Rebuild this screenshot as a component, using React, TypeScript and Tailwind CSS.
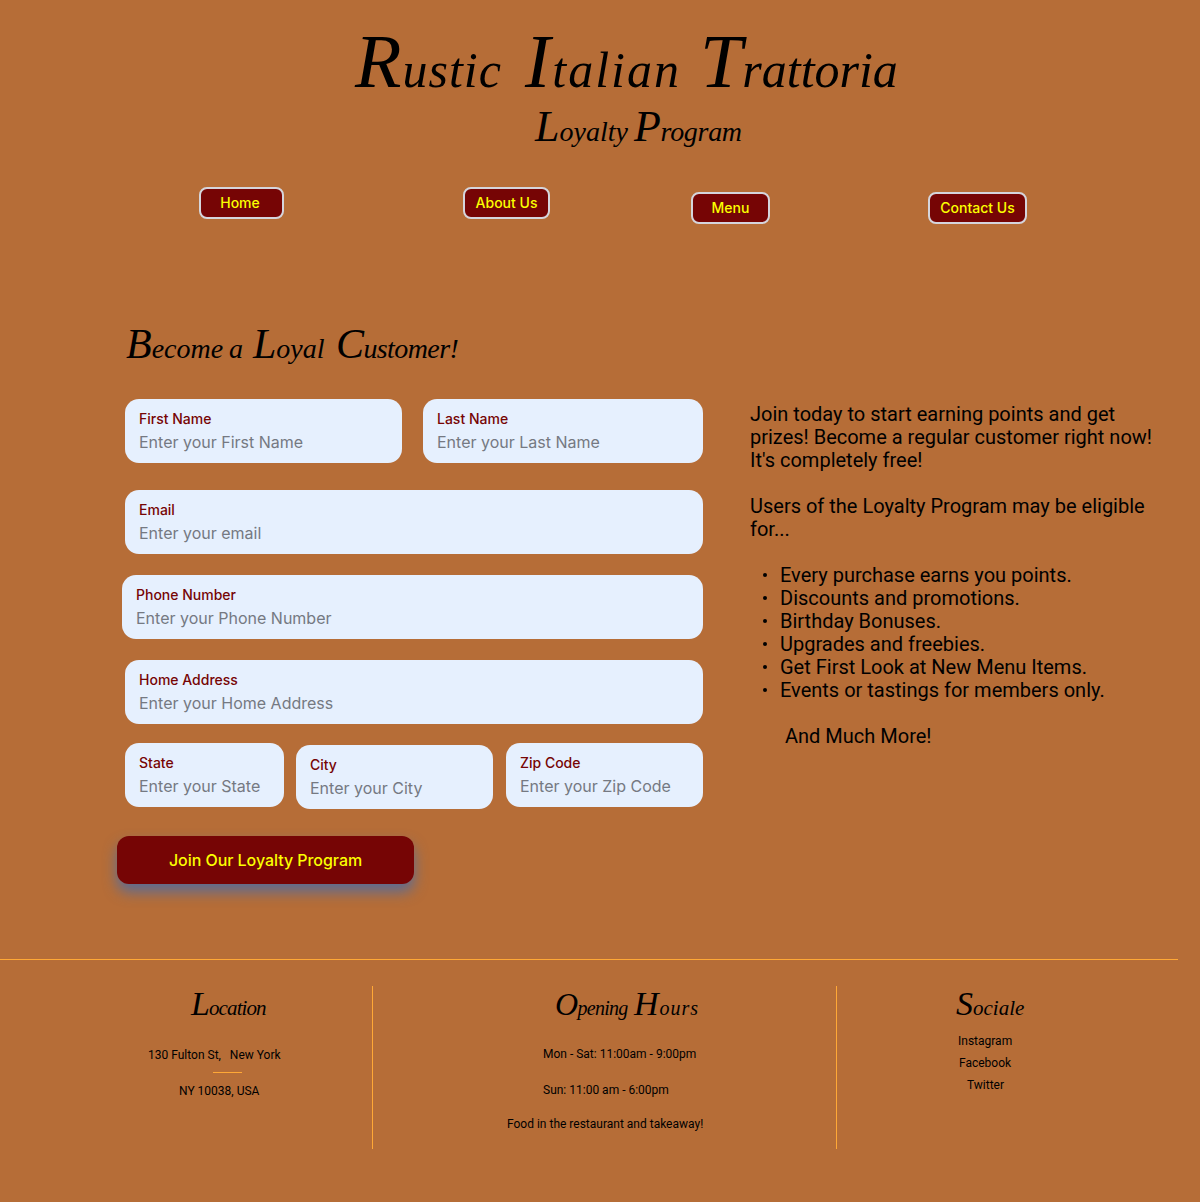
import React from "react";

function Word({ children, className }: { children: string; className: string }) {
  return <span className={`block shrink-0 whitespace-nowrap first-letter:leading-[0] ${className}`}>{children}</span>;
}

function NavButton({ label, className }: { label: string; className: string }) {
  return (
    <button
      className={`h-8 shrink-0 whitespace-nowrap rounded-lg border-2 border-[#d5d5dc] bg-[#760505] text-center text-sm leading-7 font-medium text-[#fbff00] ${className}`}
    >
      {label}
    </button>
  );
}

function Field({ label, className }: { label: string; className: string }) {
  const hint = label === "Email" ? "email" : label;
  return (
    <label className={`block h-16 shrink-0 rounded-[14px] bg-[#e6f0fe] px-3.5 pt-2.5 ${className}`}>
      <span className="block text-sm leading-5 font-medium text-[#760505]">{label}</span>
      <span className="mt-[1px] block whitespace-nowrap text-base leading-6 text-[#757982]">Enter your {hint}</span>
    </label>
  );
}

const perks = [
  "Every purchase earns you points.",
  "Discounts and promotions.",
  "Birthday Bonuses.",
  "Upgrades and freebies.",
  "Get First Look at New Menu Items.",
  "Events or tastings for members only.",
];

export default function App() {
  return (
    <div className="flex h-[1202px] w-[1200px] flex-col overflow-hidden bg-[#b66d37] font-['Inter',sans-serif] text-black">
      <header className="h-[187px] shrink-0 font-['Liberation_Serif',serif] italic">
        <h1 className="flex h-[104px] pt-[38px] pl-[355px] text-[50px] leading-[64px]">
          <Word className="w-[170px] tracking-[1px] first-letter:text-[76px]">Rustic</Word>
          <Word className="w-[175px] tracking-[2px] first-letter:text-[76px]">Italian</Word>
          <Word className="w-[200px] first-letter:text-[76px]">Trattoria</Word>
        </h1>
        <h2 className="flex pt-[12px] pl-[535px] text-[28px] leading-[32px]">
          <Word className="w-[99px] first-letter:text-[44px]">Loyalty</Word>
          <Word className="w-[120px] tracking-[-0.3px] first-letter:text-[44px]">Program</Word>
        </h2>
      </header>

      <nav className="flex h-[130px] shrink-0 items-start pl-[199px]">
        <NavButton label="Home" className="w-[85px] pr-[3px]" />
        <NavButton label="About Us" className="ml-[179px] w-[87px]" />
        <NavButton label="Menu" className="mt-[5px] ml-[141px] w-[79px]" />
        <NavButton label="Contact Us" className="mt-[5px] ml-[158px] w-[99px]" />
      </nav>

      <main className="flex h-[642px] shrink-0">
        <form className="w-[750px] shrink-0">
          <h3 className="flex h-[82px] pt-[16px] pl-[126px] font-['Liberation_Serif',serif] text-[28px] leading-[32px] italic">
            <Word className="w-[103px] first-letter:text-[42px]">Become</Word>
            <Word className="w-[24px]">a</Word>
            <Word className="w-[83px] first-letter:text-[42px]">Loyal</Word>
            <Word className="w-[122px] tracking-[-0.6px] first-letter:text-[42px]">Customer!</Word>
          </h3>
          <div className="flex pl-[125px]">
            <Field label="First Name" className="w-[277px]" />
            <Field label="Last Name" className="ml-[21px] w-[280px]" />
          </div>
          <Field label="Email" className="mt-[27px] ml-[125px] w-[578px]" />
          <Field label="Phone Number" className="mt-[21px] ml-[122px] w-[581px]" />
          <Field label="Home Address" className="mt-[21px] ml-[125px] w-[578px]" />
          <div className="mt-[19px] flex pl-[125px]">
            <Field label="State" className="w-[159px]" />
            <Field label="City" className="mt-[2px] ml-[12px] w-[197px]" />
            <Field label="Zip Code" className="ml-[13px] w-[197px]" />
          </div>
          <button
            type="button"
            className="mt-[27px] ml-[117px] block h-12 w-[297px] rounded-xl bg-[#760505] text-base font-medium tracking-[-0.05px] text-[#fbff00] shadow-[0_8px_14px_rgba(62,108,179,0.75)]"
          >
            Join Our Loyalty Program
          </button>
        </form>
        <section className="w-[420px] pt-[86px] font-['Roboto',sans-serif] text-xl leading-[23px]">
          <p>
            Join today to start earning points and get
            <br />
            prizes! Become a regular customer right now!
            <br />
            It's completely free!
          </p>
          <p className="mt-[23px]">
            Users of the Loyalty Program may be eligible
            <br />
            for...
          </p>
          <ul className="mt-[23px]">
            {perks.map((perk) => (
              <li key={perk} className="flex items-center">
                <span className="mr-[13px] mb-[2px] ml-[13px] size-1 rounded-full bg-black" />
                {perk}
              </li>
            ))}
          </ul>
          <p className="mt-[23px] pl-[35px]">And Much More!</p>
        </section>
      </main>

      <footer className="w-[1178px] shrink-0 border-t border-[#ffa836] font-['Roboto',sans-serif] text-xs leading-[14px]">
        <div className="mt-[26px] flex h-[163px]">
          <section className="w-[373px] shrink-0 border-r border-[#ffa836]">
            <h4 className="flex h-[62px] pt-[10px] pl-[191px] font-['Liberation_Serif',serif] text-[21px] leading-[24px] italic">
              <Word className="tracking-[-0.9px] first-letter:text-[34px]">Location</Word>
            </h4>
            <p className="pl-[148px] whitespace-pre">130 Fulton St,   New York</p>
            <div className="mt-[10px] ml-[213px] h-px w-[29px] bg-[#ffa836]" />
            <p className="mt-[11px] pl-[179px]">NY 10038, USA</p>
          </section>
          <section className="w-[464px] shrink-0 border-r border-[#ffa836]">
            <h4 className="flex h-[61px] pt-[10px] pl-[182px] font-['Liberation_Serif',serif] text-[20px] leading-[24px] italic">
              <Word className="w-[79px] tracking-[-0.7px] first-letter:text-[32px]">Opening</Word>
              <Word className="w-[76px] tracking-[1px] first-letter:text-[34px]">Hours</Word>
            </h4>
            <p className="pl-[170px]">Mon - Sat: 11:00am - 9:00pm</p>
            <p className="mt-[22px] pl-[170px]">Sun: 11:00 am - 6:00pm</p>
            <p className="mt-[20px] pl-[134px]">Food in the restaurant and takeaway!</p>
          </section>
          <section className="flex-1">
            <h4 className="flex h-[48px] pt-[10px] pl-[119px] font-['Liberation_Serif',serif] text-[21px] leading-[24px] italic">
              <Word className="first-letter:text-[34px]">Sociale</Word>
            </h4>
            <p className="pl-[121px]">Instagram</p>
            <p className="mt-[8px] pl-[122px]">Facebook</p>
            <p className="mt-[8px] pl-[130px]">Twitter</p>
          </section>
        </div>
      </footer>
    </div>
  );
}
